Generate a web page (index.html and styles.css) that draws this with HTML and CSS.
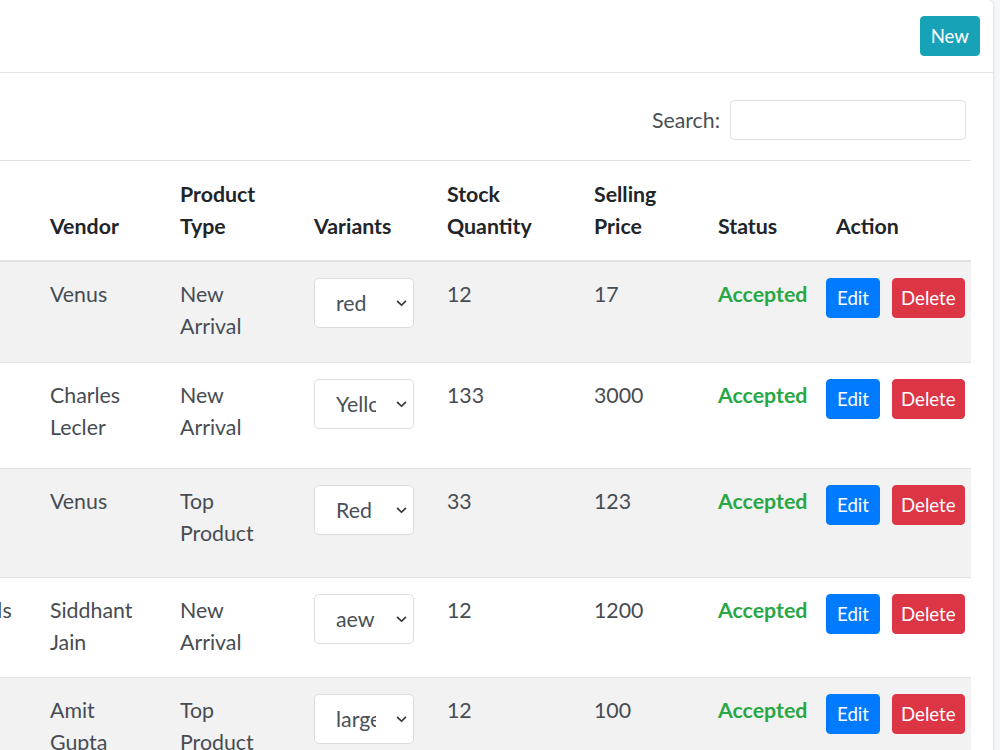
FILE: index.html
```html
<!DOCTYPE html>
<html lang="en">
<head>
  <meta charset="UTF-8">
  <meta name="viewport" content="width=device-width, initial-scale=1.0">
  <title>Products</title>
  <link rel="stylesheet" href="styles.css">
</head>
<body>
  <div class="content-wrapper">
    <div class="card">
      <div class="card-header">
        <button class="btn btn-sm btn-info">New</button>
      </div>

      <div class="card-body">
        <div class="table-tools">
          <label class="search-label">Search:
            <input type="search" class="search-input">
          </label>
        </div>

        <table class="table table-striped">
          <colgroup>
            <col class="c-num"><col class="c-img"><col class="c-name"><col class="c-cat">
            <col class="c-vendor"><col class="c-type"><col class="c-variant"><col class="c-stock">
            <col class="c-price"><col class="c-status"><col class="c-action">
          </colgroup>
          <thead>
            <tr>
              <th>#</th>
              <th>Image</th>
              <th>Product Name</th>
              <th>Group</th>
              <th>Vendor</th>
              <th>Product Type</th>
              <th>Variants</th>
              <th>Stock Quantity</th>
              <th>Selling Price</th>
              <th>Status</th>
              <th>Action</th>
            </tr>
          </thead>
          <tbody>
            <tr>
              <td>1</td>
              <td><div class="thumb" style="height: 68px"></div></td>
              <td>Ring</td>
              <td>Rings</td>
              <td>Venus</td>
              <td>New Arrival</td>
              <td>
                <div class="variant-select">
                  <select><option>red</option></select>
                  <svg class="chevron" viewBox="0 0 12 8" width="11" height="7"><path d="M1.5 1.5 6 6l4.5-4.5"/></svg>
                </div>
              </td>
              <td>12</td>
              <td>17</td>
              <td class="status">Accepted</td>
              <td><div class="actions"><button class="btn btn-sm btn-primary">Edit</button><button class="btn btn-sm btn-danger">Delete</button></div></td>
            </tr>
            <tr>
              <td>2</td>
              <td><div class="thumb" style="height: 73px"></div></td>
              <td>Sneaker</td>
              <td>Shoes</td>
              <td>Charles Lecler</td>
              <td>New Arrival</td>
              <td>
                <div class="variant-select">
                  <select><option>Yellow</option></select>
                  <svg class="chevron" viewBox="0 0 12 8" width="11" height="7"><path d="M1.5 1.5 6 6l4.5-4.5"/></svg>
                </div>
              </td>
              <td>133</td>
              <td>3000</td>
              <td class="status">Accepted</td>
              <td><div class="actions"><button class="btn btn-sm btn-primary">Edit</button><button class="btn btn-sm btn-danger">Delete</button></div></td>
            </tr>
            <tr>
              <td>3</td>
              <td><div class="thumb" style="height: 76px"></div></td>
              <td>Tote</td>
              <td>Bags</td>
              <td>Venus</td>
              <td>Top Product</td>
              <td>
                <div class="variant-select">
                  <select><option>Red</option></select>
                  <svg class="chevron" viewBox="0 0 12 8" width="11" height="7"><path d="M1.5 1.5 6 6l4.5-4.5"/></svg>
                </div>
              </td>
              <td>33</td>
              <td>123</td>
              <td class="status">Accepted</td>
              <td><div class="actions"><button class="btn btn-sm btn-primary">Edit</button><button class="btn btn-sm btn-danger">Delete</button></div></td>
            </tr>
            <tr>
              <td>4</td>
              <td><div class="thumb" style="height: 67px"></div></td>
              <td>Kit</td>
              <td>Essentials</td>
              <td>Siddhant Jain</td>
              <td>New Arrival</td>
              <td>
                <div class="variant-select">
                  <select><option>aew</option></select>
                  <svg class="chevron" viewBox="0 0 12 8" width="11" height="7"><path d="M1.5 1.5 6 6l4.5-4.5"/></svg>
                </div>
              </td>
              <td>12</td>
              <td>1200</td>
              <td class="status">Accepted</td>
              <td><div class="actions"><button class="btn btn-sm btn-primary">Edit</button><button class="btn btn-sm btn-danger">Delete</button></div></td>
            </tr>
            <tr>
              <td>5</td>
              <td><div class="thumb" style="height: 68px"></div></td>
              <td>Teddy</td>
              <td>Toys</td>
              <td>Amit Gupta</td>
              <td>Top Product</td>
              <td>
                <div class="variant-select">
                  <select><option>large</option></select>
                  <svg class="chevron" viewBox="0 0 12 8" width="11" height="7"><path d="M1.5 1.5 6 6l4.5-4.5"/></svg>
                </div>
              </td>
              <td>12</td>
              <td>100</td>
              <td class="status">Accepted</td>
              <td><div class="actions"><button class="btn btn-sm btn-primary">Edit</button><button class="btn btn-sm btn-danger">Delete</button></div></td>
            </tr>
          </tbody>
        </table>
      </div>
    </div>
  </div>
</body>
</html>
```

FILE: styles.css
```css
body {
  margin: 0;
  font-family: 'Lato', 'Liberation Sans', sans-serif;
  font-size: 21.33px;
  line-height: 32px;
  color: #212529;
  background: #f4f6f9;
  overflow: hidden;
}
.content-wrapper {
  padding-right: 7px;
}
.card {
  margin-left: -388px;
  background: #fff;
  border-radius: 5px;
  box-shadow: 0 0 1px rgba(0, 0, 0, .15), 0 1px 3px rgba(0, 0, 0, .15);
}
.card-header {
  display: flex;
  justify-content: flex-end;
  padding: 16px 13px;
  border-bottom: 1px solid #e3e3e3;
}
.card-body {
  padding: 27px 22px 0;
}
.btn {
  font-family: inherit;
  border: 1px solid transparent;
  color: #fff;
  cursor: pointer;
}
.btn-sm {
  font-size: 18.67px;
  line-height: 28px;
  padding: 5px 10px;
  border-radius: 4px;
}
.btn-info { background: #17a2b8; border-color: #17a2b8; }
.btn-primary { background: #007bff; border-color: #007bff; }
.btn-danger { background: #dc3545; border-color: #dc3545; padding: 5px 8px; }

.table-tools {
  display: flex;
  justify-content: flex-end;
  padding-right: 5px;
}
.search-label {
  display: flex;
  align-items: center;
  gap: 10px;
  color: #495057;
}
.search-input {
  width: 236px;
  height: 40px;
  box-sizing: border-box;
  border: 1px solid #dcdfe3;
  border-radius: 4px;
  font-family: inherit;
  font-size: 18.67px;
}

.table {
  width: 100%;
  margin-top: 20px;
  border-collapse: collapse;
  table-layout: fixed;
}
.c-num { width: 60px; }
.c-img { width: 100px; }
.c-name { width: 110px; }
.c-cat { width: 130px; }
.c-vendor { width: 130px; }
.c-type { width: 134px; }
.c-variant { width: 133px; }
.c-stock { width: 147px; }
.c-price { width: 124px; }
.c-status { width: 118px; }
.c-action { width: 151px; }

.table th,
.table td {
  padding: 16px;
  text-align: left;
  border-top: 1px solid #dee2e6;
}
.table th {
  padding-top: 17px;
  padding-bottom: 18px;
  vertical-align: bottom;
  border-bottom: 2px solid #dee2e6;
  font-weight: bold;
}
.table td {
  vertical-align: top;
  color: #474c52;
}
.table-striped tbody tr:nth-of-type(odd) {
  background: #f2f2f2;
}
.thumb {
  width: 60px;
  background: #ddd;
}
.status {
  font-weight: bold;
  color: #28a745 !important;
}
.table td:last-child {
  padding-left: 6px;
}
.actions {
  display: flex;
  gap: 12px;
}
.variant-select {
  position: relative;
  width: 100px;
}
.variant-select select {
  display: block;
  width: 100px;
  height: 50px;
  padding: 0 37px 0 21px;
  border: 1px solid #d9dde1;
  border-radius: 5px;
  background: #fff;
  color: #495057;
  font-family: inherit;
  font-size: 21.33px;
  appearance: none;
  -webkit-appearance: none;
}
.chevron {
  position: absolute;
  right: 7px;
  top: 22px;
  fill: none;
  stroke: #343a40;
  stroke-width: 2;
  stroke-linecap: round;
  stroke-linejoin: round;
}
```
